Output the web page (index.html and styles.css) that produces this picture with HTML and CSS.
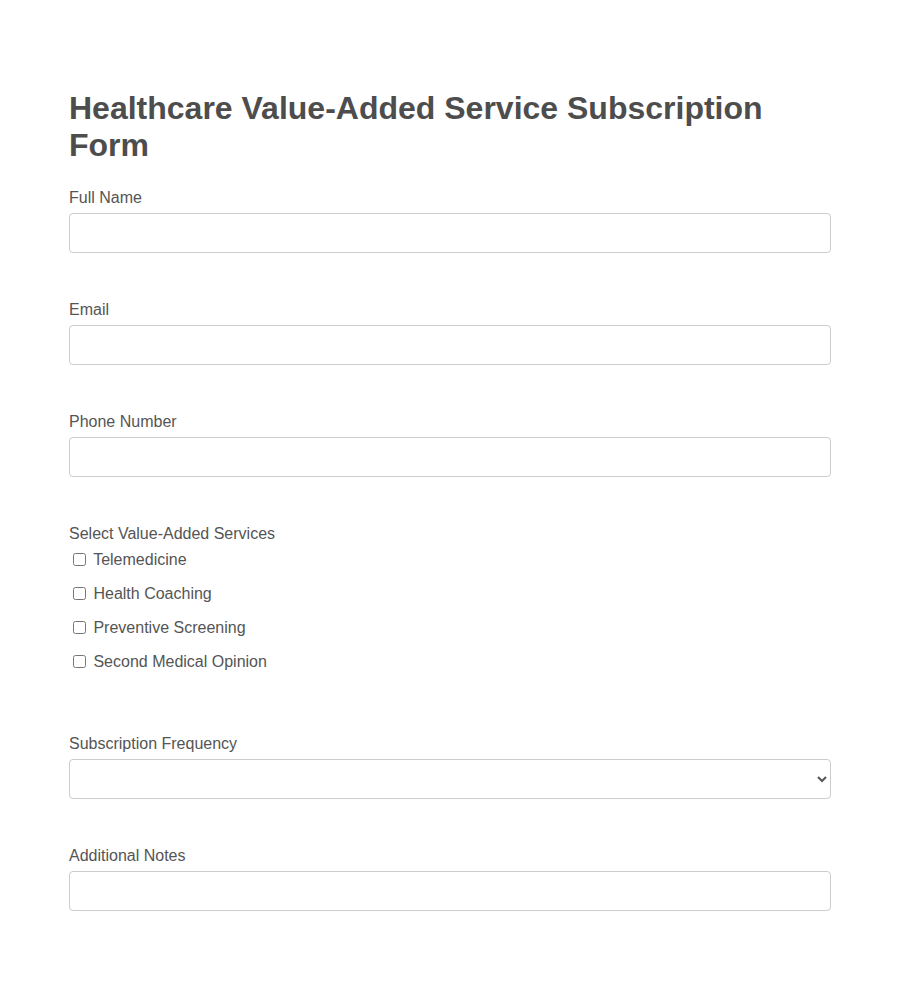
FILE: index.html
```html
<!DOCTYPE html>
<html lang="en">
  <head>
    <meta charset="UTF-8" />
    <meta name="viewport" content="width=device-width, initial-scale=1.0" />
    <title>Healthcare Value-Added Service Subscription</title>
    <link rel="stylesheet" href="styles.css">
  </head>
  <body>
    <div class="container">
      <h1>Healthcare Value-Added Service Subscription Form</h1>

      <form class="subscription-form">
        <div class="form-group">
          <label for="fullName">Full Name</label>
          <input type="text" id="fullName" name="fullName">
        </div>

        <div class="form-group">
          <label for="email">Email</label>
          <input type="email" id="email" name="email">
        </div>

        <div class="form-group">
          <label for="phone">Phone Number</label>
          <input type="tel" id="phone" name="phone">
        </div>

        <div class="form-group services">
          <label class="group-title">Select Value-Added Services</label>
          <label class="checkbox-item"><input type="checkbox" name="services" value="telemedicine"> Telemedicine</label>
          <label class="checkbox-item"><input type="checkbox" name="services" value="coaching"> Health Coaching</label>
          <label class="checkbox-item"><input type="checkbox" name="services" value="screening"> Preventive Screening</label>
          <label class="checkbox-item"><input type="checkbox" name="services" value="opinion"> Second Medical Opinion</label>
        </div>

        <div class="form-group">
          <label for="frequency">Subscription Frequency</label>
          <select id="frequency" name="frequency">
            <option value=""></option>
            <option value="monthly">Monthly</option>
            <option value="quarterly">Quarterly</option>
            <option value="yearly">Yearly</option>
          </select>
        </div>

        <div class="form-group">
          <label for="notes">Additional Notes</label>
          <input type="text" id="notes" name="notes">
        </div>
      </form>
    </div>
  </body>
</html>
```

FILE: styles.css
```css
:root {
  --text-color: #555555;
  --heading-color: #4d4d4d;
  --border-color: #cccccc;
  font-family: "Liberation Sans", Arial, Helvetica, sans-serif;
}

body {
  margin: 0;
  background-color: #ffffff;
  color: var(--text-color);
}

.container {
  width: 762px;
  margin: 0 auto;
  padding: 90px 0 40px;
}

h1 {
  margin: 0 0 25px;
  font-size: 32px;
  line-height: 37px;
  color: var(--heading-color);
}

.form-group {
  margin-bottom: 48px;
}

.form-group > label {
  display: block;
  font-size: 16px;
  line-height: 18px;
  margin-bottom: 6px;
}

.form-group input[type="text"],
.form-group input[type="email"],
.form-group input[type="tel"],
.form-group select {
  display: block;
  width: 100%;
  height: 40px;
  box-sizing: border-box;
  padding: 10px;
  border: 1px solid var(--border-color);
  border-radius: 4px;
  background-color: #ffffff;
  font-family: inherit;
  font-size: 16px;
  color: var(--text-color);
}

/* checkbox list: its last item's margin collapses into the group's */
.services {
  margin-bottom: 64px;
}

.services .group-title {
  margin-bottom: 8px;
}

.services .checkbox-item {
  margin-bottom: 16px;
}

.checkbox-item input {
  margin: 0 3px 0 4px;
  vertical-align: -1px;
}
```
